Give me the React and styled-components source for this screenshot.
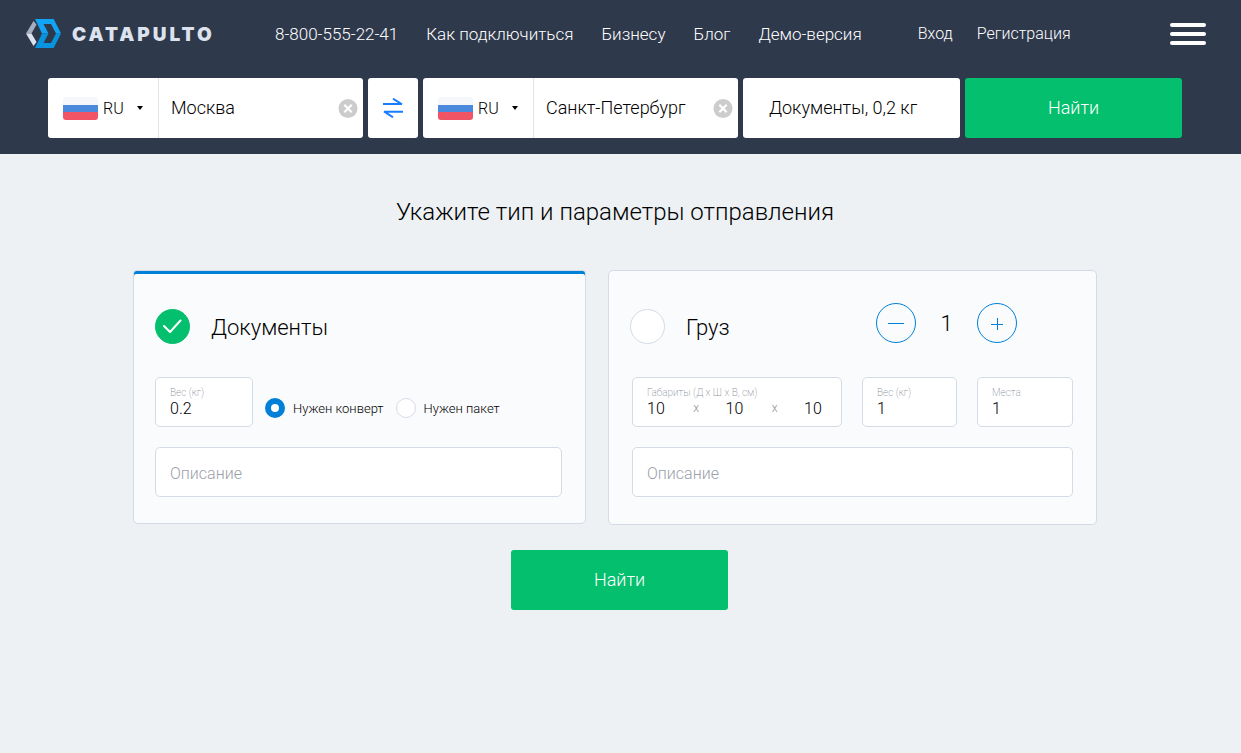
import { useState } from "react";
import styled, { createGlobalStyle } from "styled-components";

const GlobalStyle = createGlobalStyle`
    * {
        box-sizing: border-box;
    }

    body {
        margin: 0;
        background-color: #edf1f4;
        color: #000;
        font-family: Roboto, "Liberation Sans", sans-serif;
    }

    button, input, select {
        font-family: inherit;
        color: inherit;
        outline: none;
    }
`

const Header = styled.header`
    background-color: #2f394c;
    padding-bottom: 16px;
`

const TopBar = styled.div`
    height: 78px;
    padding: 0 35px 10px 26px;
    display: flex;
    align-items: center;
`

const Logo = styled.a`
    display: flex;
    align-items: center;
    gap: 10px;
    width: 249px;
    color: #dde3ee;
    font-family: Inter, Roboto, sans-serif;
    font-size: 19px;
    font-weight: 900;
    letter-spacing: 3px;
    text-decoration: none;
`

const Nav = styled.nav`
    display: flex;
    gap: ${props => props.$gap}px;
    margin-right: 56px;
    font-size: ${props => props.$size}px;
`

const NavLink = styled.a`
    color: #fff;
    font-weight: 300;
    line-height: 20px;
    text-decoration: none;
    white-space: nowrap;
`

const MenuButton = styled.button`
    display: flex;
    flex-direction: column;
    gap: 5px;
    margin-left: auto;
    padding: 0;
    border: 0;
    background: none;
    cursor: pointer;
`

const MenuLine = styled.span`
    width: 36px;
    height: 4px;
    border-radius: 2px;
    background-color: #fff;
`

const SearchBar = styled.form`
    display: grid;
    grid-template-columns: 315fr 50px 315fr 217fr 217fr;
    gap: 5px;
    padding: 0 59px 0 48px;
`

const Place = styled.div`
    display: flex;
    height: 60px;
    border-radius: 3px;
    background-color: #fff;
    overflow: hidden;
`

const Country = styled.label`
    display: flex;
    align-items: center;
    gap: 5px;
    width: 111px;
    flex-shrink: 0;
    padding: 0 15px;
    border-right: 1px solid #e3e3e3;
`

const CountrySelect = styled.select`
    appearance: none;
    flex: 1;
    min-width: 0;
    padding: 0;
    border: 0;
    background: none;
    font-size: 16px;
    font-weight: 300;
`

const CityInput = styled.input`
    flex: 1;
    min-width: 0;
    padding: 0 12px 2px;
    border: 0;
    background: none;
    font-size: 18px;
    font-weight: 300;
`

const ClearButton = styled.button`
    display: flex;
    align-items: center;
    padding: 0 5px 0 0;
    border: 0;
    background: none;
    cursor: pointer;
`

const SwapButton = styled.button`
    display: flex;
    align-items: center;
    justify-content: center;
    padding: 0;
    border: 0;
    border-radius: 3px;
    background-color: #fff;
    cursor: pointer;
`

const ParcelButton = styled.button`
    padding: 0 26px 2px;
    border: 0;
    border-radius: 3px;
    background-color: #fff;
    font-size: 18px;
    font-weight: 300;
    text-align: left;
    cursor: pointer;
`

const SubmitButton = styled.button`
    min-width: 217px;
    height: 60px;
    padding: 0 0 2px;
    border: 0;
    border-radius: 3px;
    background-color: #04bf6d;
    color: #fff;
    font-size: 18px;
    font-weight: 300;
    cursor: pointer;
`

const Main = styled.main`
    padding: 42px 59px 42px 48px;
`

const Title = styled.h1`
    margin: 0 0 42px;
    font-size: 24px;
    font-weight: 300;
    line-height: 32px;
    text-align: center;
`

const Cards = styled.div`
    display: grid;
    grid-template-columns: 453fr 489fr;
    align-items: start;
    gap: 22px;
    max-width: 964px;
    margin: 0 auto;
`

const Card = styled.section`
    padding: ${props => props.$selected ? '0 23px 26px 21px' : '0 23px 27px'};
    border: 1px solid #d5dbe6;
    border-radius: ${props => props.$selected ? '3px 3px 5px 5px' : '5px'};
    background-color: #fafbfd;
    box-shadow: ${props => props.$selected ? 'inset 0 3px 0 #0080d7' : 'none'};
`

const CardHead = styled.div`
    display: flex;
    align-items: flex-start;
    justify-content: space-between;
    height: 106px;
    padding: 32px 56px 0 0;
    margin-left: ${props => props.$shift || 0}px;
`

const TypeLabel = styled.label`
    display: flex;
    align-items: flex-start;
    gap: 21px;
    padding-top: 6px;
    font-size: 22px;
    font-weight: 300;
    line-height: 38px;
    cursor: pointer;
`

const TypeMark = styled.span`
    display: grid;
    place-items: center;

    > * {
        grid-area: 1 / 1;
    }
`

const TypeRadio = styled.input`
    appearance: none;
    width: 35px;
    height: 35px;
    margin: 0;
    border: 1px solid #d5dbe6;
    border-radius: 50%;
    background-color: #fff;

    &:checked {
        border-color: #04bf6d;
        background-color: #04bf6d;
    }
`

const Counter = styled.div`
    display: flex;
    align-items: center;
`

const CounterButton = styled.button`
    display: flex;
    align-items: center;
    justify-content: center;
    width: 40px;
    height: 40px;
    padding: 0;
    border: 1px solid #0080d7;
    border-radius: 50%;
    background: none;
    cursor: pointer;
`

const CounterValue = styled.output`
    width: 61px;
    font-size: 22px;
    font-weight: 300;
    text-align: center;
`

const Fields = styled.div`
    display: grid;
    grid-template-columns: ${props => props.$columns};
    gap: ${props => props.$gap}px;
    margin-bottom: 20px;
`

const Field = styled.div`
    display: flex;
    flex-direction: column;
    height: 50px;
    padding: 9px 14px 0;
    border: 1px solid #d5dbe6;
    border-radius: 5px;
    background-color: #fff;
`

const FieldLabel = styled.label`
    color: #8a919d;
    font-size: 10px;
    font-weight: 200;
    line-height: 12px;
    white-space: nowrap;
`

const FieldRow = styled.div`
    display: flex;
    align-items: center;
    justify-content: space-between;
    padding-right: 3px;
    color: #8a919d;
    font-size: 12px;
    font-weight: 300;
    line-height: 18px;
`

const FieldInput = styled.input`
    width: ${props => props.$width || '100%'};
    height: 18px;
    padding: 0;
    border: 0;
    background: none;
    color: #000;
    font-size: 16px;
    font-weight: 300;
`

const Packing = styled.div`
    display: flex;
    align-items: center;
    gap: 12px;
    padding-top: 12px;
`

const PackingLabel = styled.label`
    display: flex;
    align-items: center;
    gap: 8px;
    font-size: 13px;
    font-weight: 300;
    white-space: nowrap;
`

const PackingRadio = styled.input`
    appearance: none;
    width: 20px;
    height: 20px;
    margin: 0;
    border: 1px solid #d5dbe6;
    border-radius: 50%;
    background-color: #fff;

    &:checked {
        border: 6px solid #0080d7;
    }
`

const Description = styled.input`
    display: block;
    width: 100%;
    height: 50px;
    padding: 2px 14px 0;
    border: 1px solid #d5dbe6;
    border-radius: 5px;
    background-color: #fff;
    font-size: 16px;
    font-weight: 300;

    &::placeholder {
        color: #9aa0aa;
    }
`

const Actions = styled.div`
    display: flex;
    justify-content: center;
    padding: 25px 0 0 9px;
`

const LogoMark = () => (
    <svg width="36" height="30" viewBox="0 0 36 30" aria-hidden="true">
        <path d="M0 14.500 7.500 2 10.500 5.500 5.500 14.500z" fill="#a5afc0" />
        <path d="M0 14.500h5.500l5 8.500-3 4z" fill="#dde3ee" />
        <path d="M9 0h18.700L35 14.500H16z" fill="#12a4f4" />
        <path d="M16 14.500h19L27.700 29H9z" fill="#0793dd" />
        <path d="M17.500 5H25l5 9.500-5 9.500h-7.500l5-9.500z" fill="#2f394c" />
    </svg>
)

const Flag = () => (
    <svg width="35" height="23" viewBox="0 0 35 23" aria-hidden="true">
        <rect width="35" height="23" rx="3" fill="#f5f7fa" />
        <path d="M0 8h35v7H0z" fill="#4a89dc" />
        <path d="M0 15h35v5a3 3 0 0 1-3 3H3a3 3 0 0 1-3-3z" fill="#f15565" />
    </svg>
)

const Location = ({label, city, onChange}) => (
    <Place>
        <Country>
            <Flag />
            <CountrySelect aria-label={`${label}: страна`} defaultValue="RU">
                <option>RU</option>
                <option>KZ</option>
            </CountrySelect>
            <svg width="6" height="4" viewBox="0 0 6 4" aria-hidden="true">
                <path d="M0 0h6L3 4z" fill="#000" />
            </svg>
        </Country>
        <CityInput aria-label={`${label}: город`} value={city} onChange={e => onChange(e.target.value)} />
        <ClearButton type="button" aria-label="Очистить" onClick={() => onChange('')}>
            <svg width="20" height="20" viewBox="0 0 20 20">
                <circle cx="10" cy="10.5" r="9.5" fill="#ccc" />
                <path d="M6.3 6.8 13.7 14.2M13.7 6.8 6.3 14.2" stroke="#fff" strokeWidth="2.2" />
            </svg>
        </ClearButton>
    </Place>
)

const links = ['8-800-555-22-41', 'Как подключиться', 'Бизнесу', 'Блог', 'Демо-версия'];

const App = () => {
    const [from, setFrom] = useState('Москва');
    const [to, setTo] = useState('Санкт-Петербург');
    const [type, setType] = useState('docs');
    const [count, setCount] = useState(1);

    const swap = () => {
        setFrom(to);
        setTo(from);
    }

    return (
        <>
            <GlobalStyle />
            <Header>
                <TopBar>
                    <Logo href="#">
                        <LogoMark />
                        CATAPULTO
                    </Logo>
                    <Nav $gap={28} $size={17}>
                        {links.map(link => <NavLink key={link} href="#">{link}</NavLink>)}
                    </Nav>
                    <Nav $gap={24} $size={16}>
                        <NavLink href="#">Вход</NavLink>
                        <NavLink href="#">Регистрация</NavLink>
                    </Nav>
                    <MenuButton aria-label="Меню">
                        <MenuLine />
                        <MenuLine />
                        <MenuLine />
                    </MenuButton>
                </TopBar>
                <SearchBar onSubmit={e => e.preventDefault()}>
                    <Location label="Откуда" city={from} onChange={setFrom} />
                    <SwapButton type="button" aria-label="Поменять местами" onClick={swap}>
                        <svg width="22" height="20" viewBox="0 0 22 20" fill="none" stroke="#1a7cff" strokeWidth="2">
                            <path d="M1 6h19M11 .7 20 6.300" />
                            <path d="M2 13.700h19M11 19.300 2 13.400" />
                        </svg>
                    </SwapButton>
                    <Location label="Куда" city={to} onChange={setTo} />
                    <ParcelButton type="button">Документы, 0,2 кг</ParcelButton>
                    <SubmitButton>Найти</SubmitButton>
                </SearchBar>
            </Header>
            <Main>
                <Title>Укажите тип и параметры отправления</Title>
                <Cards>
                    <Card $selected={type === 'docs'}>
                        <CardHead>
                            <TypeLabel>
                                <TypeMark>
                                    <TypeRadio type="radio" name="type" checked={type === 'docs'} onChange={() => setType('docs')} />
                                    {type === 'docs' && <svg width="19" height="15" viewBox="0 0 19 15" fill="none" stroke="#fff" strokeWidth="2" strokeLinecap="round" strokeLinejoin="round">
                                        <path d="M1 7 7 13 17.500 1.500" />
                                    </svg>}
                                </TypeMark>
                                Документы
                            </TypeLabel>
                        </CardHead>
                        <Fields $columns="98px 1fr" $gap={12}>
                            <Field>
                                <FieldLabel htmlFor="docs-weight">Вес (кг)</FieldLabel>
                                <FieldInput id="docs-weight" defaultValue="0.2" />
                            </Field>
                            <Packing>
                                <PackingLabel>
                                    <PackingRadio type="radio" name="packing" defaultChecked />
                                    Нужен конверт
                                </PackingLabel>
                                <PackingLabel>
                                    <PackingRadio type="radio" name="packing" />
                                    Нужен пакет
                                </PackingLabel>
                            </Packing>
                        </Fields>
                        <Description aria-label="Описание" placeholder="Описание" />
                    </Card>
                    <Card $selected={type === 'cargo'}>
                        <CardHead $shift={-2}>
                            <TypeLabel>
                                <TypeMark>
                                    <TypeRadio type="radio" name="type" checked={type === 'cargo'} onChange={() => setType('cargo')} />
                                    {type === 'cargo' && <svg width="19" height="15" viewBox="0 0 19 15" fill="none" stroke="#fff" strokeWidth="2" strokeLinecap="round" strokeLinejoin="round">
                                        <path d="M1 7 7 13 17.500 1.500" />
                                    </svg>}
                                </TypeMark>
                                Груз
                            </TypeLabel>
                            <Counter>
                                <CounterButton type="button" aria-label="Меньше" onClick={() => setCount(Math.max(1, count - 1))}>
                                    <svg width="18" height="14" viewBox="0 0 18 14" stroke="#0080d7">
                                        <path d="M1 7.500h16" />
                                    </svg>
                                </CounterButton>
                                <CounterValue>{count}</CounterValue>
                                <CounterButton type="button" aria-label="Больше" onClick={() => setCount(count + 1)}>
                                    <svg width="14" height="14" viewBox="0 0 14 14" stroke="#0080d7">
                                        <path d="M1 8.500h12M7.500 2v12" />
                                    </svg>
                                </CounterButton>
                            </Counter>
                        </CardHead>
                        <Fields $columns="210fr 95fr 96fr" $gap={20}>
                            <Field>
                                <FieldLabel htmlFor="length">Габариты (Д x Ш x В, см)</FieldLabel>
                                <FieldRow>
                                    <FieldInput id="length" $width="20px" defaultValue="10" />
                                    x
                                    <FieldInput aria-label="Ширина" $width="20px" defaultValue="10" />
                                    x
                                    <FieldInput aria-label="Высота" $width="20px" defaultValue="10" />
                                </FieldRow>
                            </Field>
                            <Field>
                                <FieldLabel htmlFor="cargo-weight">Вес (кг)</FieldLabel>
                                <FieldInput id="cargo-weight" defaultValue="1" />
                            </Field>
                            <Field>
                                <FieldLabel htmlFor="places">Места</FieldLabel>
                                <FieldInput id="places" defaultValue="1" />
                            </Field>
                        </Fields>
                        <Description aria-label="Описание" placeholder="Описание" />
                    </Card>
                </Cards>
                <Actions>
                    <SubmitButton type="button">Найти</SubmitButton>
                </Actions>
            </Main>
        </>
    );
}

export default App;
